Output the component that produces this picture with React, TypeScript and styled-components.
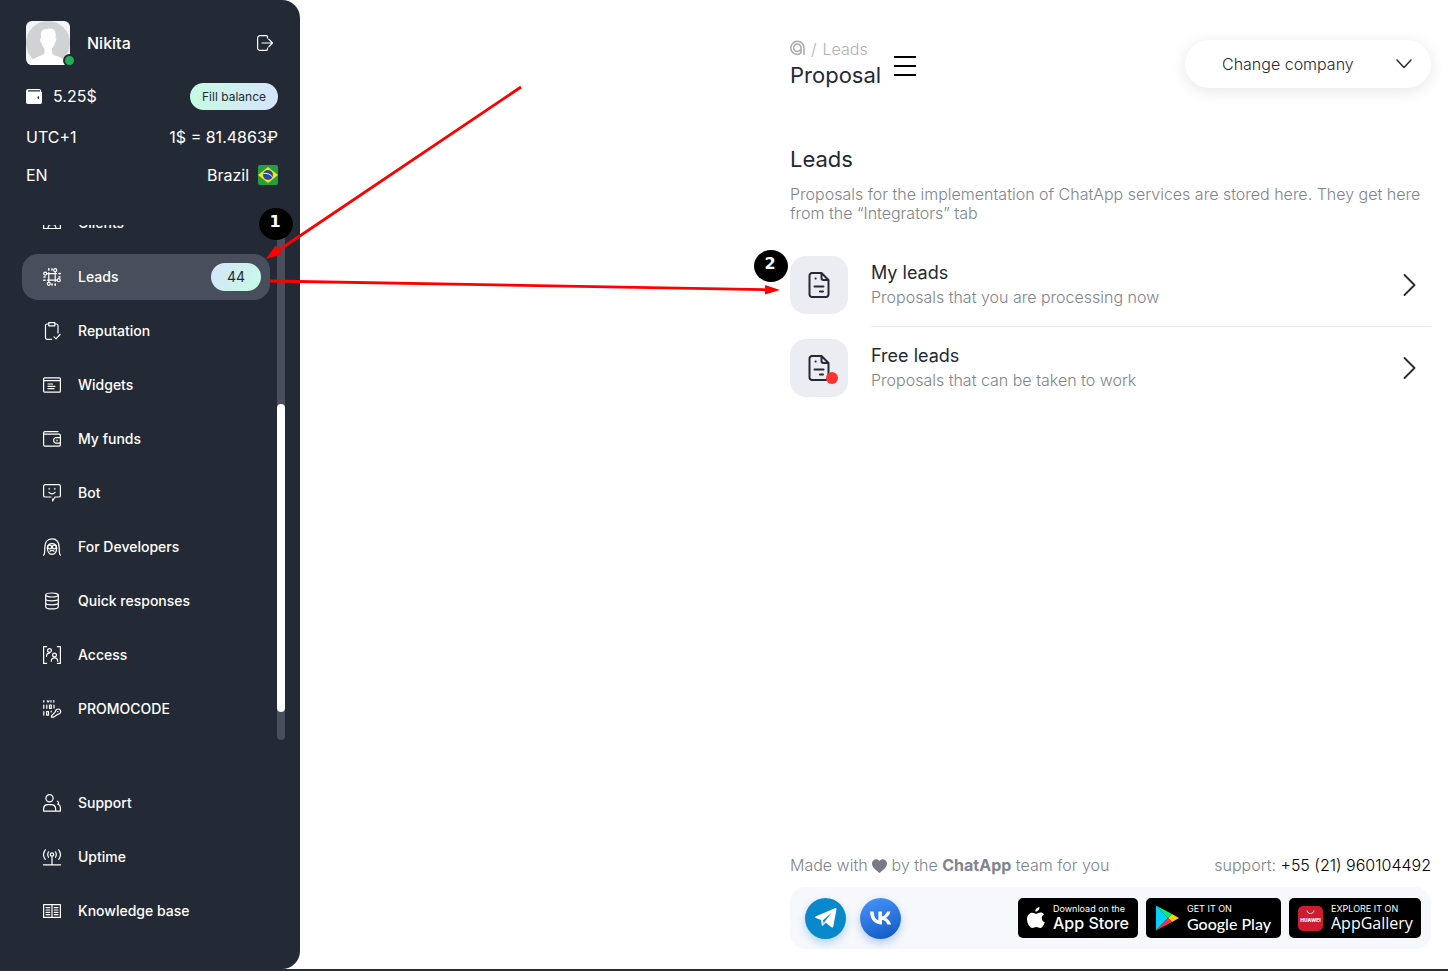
import React from "react";
import styled, { createGlobalStyle } from "styled-components";

const GlobalStyle = createGlobalStyle`
  *, *::before, *::after { box-sizing: border-box; }
  body {
    margin: 0;
    background: #fff;
    color: #242a35;
    font-family: Inter, "Liberation Sans", sans-serif;
    font-size: 16px;
    line-height: 19px;
  }
  h1, h2, h3, p, ul { margin: 0; padding: 0; }
  ul { list-style: none; }
  a { color: inherit; text-decoration: none; }
  button, select { font: inherit; color: inherit; border: 0; background: none; padding: 0; cursor: pointer; }
  svg { display: block; flex: none; }
`;

const Page = styled.div`
  position: relative;
  display: flex;
  min-height: 100vh;
  border-bottom: 2px solid #272e35;
  overflow: hidden;
`;

/* Sidebar */

const Sidebar = styled.aside`
  display: flex;
  flex-direction: column;
  flex: none;
  width: 300px;
  height: calc(100vh - 2px);
  padding: 21px 15px 35px 22px;
  background: #242a35;
  color: #fff;
  border-radius: 0 18px 18px 0;
`;

const Account = styled.div`
  display: flex;
  flex-direction: column;
  padding: 0 7px 0 4px;
`;

const AccountRow = styled.div<{ $height: number }>`
  display: flex;
  align-items: center;
  justify-content: space-between;
  height: ${(p) => p.$height}px;
`;

const Profile = styled.div`
  display: flex;
  align-items: center;
  gap: 17px;
  font-weight: 500;
`;

const Avatar = styled.div`
  position: relative;
  width: 44px;
  height: 44px;

  > svg { border-radius: 6px; }
`;

const OnlineDot = styled.span`
  position: absolute;
  right: -6px;
  bottom: -2px;
  width: 13px;
  height: 13px;
  border: 2px solid #242a35;
  border-radius: 50%;
  background: #1eb053;
`;

const LogoutButton = styled.button`
  margin-right: 4px;
`;

const Inline = styled.span<{ $gap: number }>`
  display: flex;
  align-items: center;
  gap: ${(p) => p.$gap}px;
`;

const FillButton = styled.button`
  height: 27px;
  padding: 0 12px;
  border-radius: 14px;
  background: linear-gradient(100deg, #c6fce2, #d6e4fd);
  color: #242a35;
  font-size: 12px;
`;

const NavArea = styled.div`
  display: flex;
  flex: 1;
  min-height: 0;
  gap: 7px;
  margin: 22px 0 40px;
`;

const NavClip = styled.nav`
  flex: 1;
  overflow: hidden;
`;

const NavList = styled.ul<{ $scrolled?: boolean }>`
  display: flex;
  flex-direction: column;
  gap: 8px;
  margin-top: ${(p) => (p.$scrolled ? "-25px" : "0")};
`;

const NavLink = styled.a<{ $active?: boolean }>`
  display: flex;
  align-items: center;
  gap: 16px;
  height: 46px;
  padding: 0 9px 0 20px;
  border-radius: 16px;
  background: ${(p) => (p.$active ? "#484e5b" : "transparent")};
  font-size: 14px;
  line-height: 18px;
  font-weight: 500;
`;

const Count = styled.span`
  display: flex;
  align-items: center;
  justify-content: center;
  width: 50px;
  height: 28px;
  margin-left: auto;
  border-radius: 14px;
  background: linear-gradient(120deg, #d6e4fd, #c6fce2);
  color: #242a35;
  font-weight: 400;
`;

const Track = styled.div`
  display: grid;
  grid-template-rows: 179fr 308fr 28fr;
  width: 8px;
  border-radius: 4px;
  background: #484e5b;
`;

const Thumb = styled.div`
  grid-row: 2;
  border-radius: 4px;
  background: #fff;
`;

/* Main column */

const Main = styled.main`
  display: flex;
  flex-direction: column;
  flex: 1;
  max-width: 641px;
  margin: 0 17px 0 auto;
  padding: 40px 0 20px;
`;

const Header = styled.header`
  display: flex;
  justify-content: space-between;
  align-items: flex-start;
`;

const TitleBlock = styled.div`
  display: flex;
  align-items: center;
  gap: 13px;
`;

const Crumbs = styled.div`
  display: flex;
  align-items: center;
  gap: 6px;
  color: #b1b2b5;
  font-weight: 300;

  svg { margin-bottom: 3px; }
`;

const Title = styled.h1`
  font-size: 22px;
  line-height: 32px;
  font-weight: 400;
`;

const MenuButton = styled.button`
  display: flex;
  flex-direction: column;
  gap: 7px;
  width: 22px;
`;

const MenuLine = styled.span`
  height: 2px;
  background: #000;
`;

const CompanyPicker = styled.label`
  position: relative;
  width: 246px;
  height: 48px;
  border-radius: 24px;
  background: #fff;
  box-shadow: 0 3px 16px rgba(0, 0, 0, 0.1);

  select {
    width: 100%;
    height: 100%;
    padding-left: 37px;
    border-radius: 24px;
    appearance: none;
    outline: none;
    font-weight: 300;
  }

  svg {
    position: absolute;
    top: 19px;
    right: 19px;
    pointer-events: none;
  }
`;

const SectionTitle = styled.h2`
  margin-top: 52px;
  font-size: 22px;
  line-height: 32px;
  font-weight: 400;
`;

const Description = styled.p`
  margin-top: 10px;
  color: #80848d;
  font-weight: 300;
`;

const LeadList = styled.ul`
  display: flex;
  flex-direction: column;
  margin-top: 21px;
`;

const LeadLink = styled.a`
  display: flex;
  gap: 23px;
  height: 83px;
  padding-top: 12px;
`;

const Tile = styled.span`
  position: relative;
  display: flex;
  align-items: center;
  justify-content: center;
  flex: none;
  width: 58px;
  height: 58px;
  border-radius: 16px;
  background: #ecedf3;
`;

const AlertDot = styled.span`
  position: absolute;
  right: 10px;
  bottom: 13px;
  width: 12px;
  height: 12px;
  border-radius: 50%;
  background: #ff3232;
`;

const LeadBody = styled.span<{ $divided?: boolean }>`
  display: flex;
  align-items: center;
  justify-content: space-between;
  flex: 1;
  padding: 0 15px 12px 0;
  border-bottom: 1px solid ${(p) => (p.$divided ? "#e9eaf1" : "transparent")};
`;

const LeadText = styled.span`
  display: flex;
  flex-direction: column;
  color: #80848d;
  font-weight: 300;
  line-height: 24px;
`;

const LeadName = styled.span`
  color: #242a35;
  font-size: 18px;
  font-weight: 400;
`;

const Footer = styled.footer`
  display: flex;
  flex-direction: column;
  gap: 12px;
  margin-top: auto;
`;

const FooterLine = styled.div`
  display: flex;
  justify-content: space-between;
  color: #80848d;
  font-weight: 300;
  white-space: pre;

  strong { font-weight: 700; }
  a { color: #000; }
  svg { display: inline-block; vertical-align: -2px; }
`;

const LinksBar = styled.div`
  display: flex;
  align-items: center;
  justify-content: space-between;
  height: 62px;
  padding: 0 10px 0 15px;
  border-radius: 16px;
  background: #f7f8fb;
`;

const Social = styled.a<{ $bg: string; $glow: string }>`
  display: flex;
  align-items: center;
  justify-content: center;
  width: 41px;
  height: 41px;
  border-radius: 50%;
  background: ${(p) => p.$bg};
  box-shadow: 0 4px 8px ${(p) => p.$glow};
`;

const StoreBadge = styled.a<{ $width: number }>`
  display: flex;
  align-items: center;
  gap: 8px;
  width: ${(p) => p.$width}px;
  height: 40px;
  padding-left: 9px;
  border-radius: 5px;
  background: #000;
  color: #fff;
  white-space: nowrap;
`;

const StoreText = styled.span`
  display: flex;
  flex-direction: column;
`;

const StoreCaption = styled.small`
  font-size: 9px;
  line-height: 10px;
`;

const StoreName = styled.span<{ $font?: string }>`
  font-family: ${(p) => p.$font || "Inter"}, sans-serif;
  font-size: 16px;
  line-height: 19px;
  font-weight: 500;
`;

/* Walkthrough annotations laid over the page */

const Arrows = styled.svg`
  position: absolute;
  top: 0;
  left: 0;
  pointer-events: none;
`;

const Step = styled.span<{ $x: number; $y: number }>`
  position: absolute;
  left: ${(p) => p.$x}px;
  top: ${(p) => p.$y}px;
  width: 34px;
  height: 32px;
  padding-right: 2px;
  border-radius: 50%;
  background: #000;
  color: #fff;
  font: 700 16px/28px "DejaVu Sans", sans-serif;
  text-align: center;
`;

/* Icons */

const Icon = ({ children }: { children: React.ReactNode }) => (
  <svg width="20" height="20" viewBox="-1 -1 20 20" fill="none" stroke="#fff" strokeWidth="1.2" strokeLinecap="round" strokeLinejoin="round" aria-hidden="true">
    {children}
  </svg>
);

const icons: Record<string, React.ReactNode> = {
  clients: (
    <Icon>
      <path d="M.6 1h16.8v13.500H.6z" />
      <circle cx="9" cy="8" r="2.4" />
      <path d="M5 14.500c0-2.600 1.500-4 4-4s4 1.400 4 4" />
    </Icon>
  ),
  leads: (
    <Icon>
      <circle cx="2.200" cy="5.600" r="1.500" />
      <circle cx="12.200" cy="2.200" r="1.500" />
      <circle cx="15.800" cy="12.200" r="1.500" />
      <circle cx="5.800" cy="15.800" r="1.500" />
      <path d="M3.800 5.600H13.500M12.200 3.800v9.500M14.200 12.200H4.500M5.800 14.200V4.500" />
      <path d="M5.800.8V2M17.200 5.600H16M12.200 17.200V16M.8 12.200H2M1 9h1M16 9h1M9 1v1M9 16v1" strokeWidth="1.600" />
    </Icon>
  ),
  reputation: (
    <Icon>
      <path d="M5.500 2H4a1.500 1.500 0 0 0-1.500 1.500v12.300a1.500 1.500 0 0 0 1.500 1.500h4.500M12 2h1.500A1.500 1.500 0 0 1 15 3.500V11M5.800.6h6v3.200h-6zM11 14.800l2 2 4-4.300" />
    </Icon>
  ),
  widgets: (
    <Icon>
      <rect x=".6" y="1.800" width="16.800" height="14.400" rx="1" />
      <path d="M.6 4.600h16.800M5 8h4.500M5 10.300h7M5 12.700h6" />
    </Icon>
  ),
  funds: (
    <Icon>
      <path d="M15 1.600H2A1.400 1.400 0 0 0 .6 3v11.800a1.400 1.400 0 0 0 1.400 1.400h14a1.400 1.400 0 0 0 1.400-1.400V5.600A1.400 1.400 0 0 0 16 4.200H1M17.400 7.600h-5l-1.600 1.400v2.700l1.600 1.400h5" />
      <path d="M14 10v.8" />
    </Icon>
  ),
  bot: (
    <Icon>
      <path d="M8 13H2.200A1.600 1.600 0 0 1 .6 11.400V2.200A1.600 1.600 0 0 1 2.200.6h13.600a1.600 1.600 0 0 1 1.600 1.600v9.200a1.600 1.600 0 0 1-1.600 1.600H12l-2.400 4V15" />
      <path d="M6.200 4.300v.9M11.800 4.300v.9M6 8.300c1.500 2 4.500 2 6 0" />
    </Icon>
  ),
  developers: (
    <Icon>
      <path d="M.6 17.200c1.300-1.500 1.200-3.700 1.200-7.200C1.800 4.300 4 .8 9 .8S16.200 4.300 16.200 10c0 3.500-.1 5.700 1.200 7.200" />
      <path d="M4.300 9.500C4.300 7 6 5.600 9 5.600s4.700 1.400 4.700 3.900c0 4-1.700 6.800-4.700 6.800s-4.700-2.800-4.700-6.800z" />
      <circle cx="6.700" cy="9" r="1.900" />
      <circle cx="11.300" cy="9" r="1.900" />
      <path d="M7 13.300c.8-1.300 3.200-1.300 4 0" />
    </Icon>
  ),
  responses: (
    <Icon>
      <ellipse cx="9" cy="3" rx="6.300" ry="2" />
      <path d="M2.700 3v12c0 2.600 12.600 2.600 12.600 0V3M2.700 7c0 2.400 12.600 2.400 12.600 0M2.700 11c0 2.400 12.600 2.400 12.600 0" />
    </Icon>
  ),
  access: (
    <Icon>
      <path d="M3.600.6h-3v16.800h3M14.400.6h3v16.800h-3" />
      <circle cx="6.500" cy="4.500" r="1.900" />
      <path d="M3.500 10.500c0-2.500 1.200-3.300 3-3.300" />
      <circle cx="11.500" cy="9" r="1.900" />
      <path d="M8.300 15.200c0-2.300 1-3.300 3.200-3.300s3.200 1 3.200 3.300" />
    </Icon>
  ),
  promo: (
    <Icon>
      <path d="M.8.600v1.500M4.300.8l.8 1.300L6 .8M8 .600v1.500M10.800.600v1.500M.8 5v3.300M3.800 5v3.300M6.500 5h1.800v3.300H6.500zM11 5v3M.8 11.500v3.600M3.600 11.500h1.900v3.600H3.600zM8.200 11v1" />
      <path d="M8.500 15.800l4-4.200a2.600 2.600 0 1 1 2.300 2.600l-4.300 3H8.500zM14.800 11.600h.2" />
    </Icon>
  ),
  support: (
    <Icon>
      <circle cx="6.500" cy="4.300" r="3.600" />
      <path d="M.6 17.200v-2.400c0-2.700 1.900-4.200 4.200-4.200h3.600c2.300 0 4.200 1.500 4.200 4.200v2.400zM12.600 17.200h4.800v-3.800c0-1.500-.7-2.400-2-3.200M14.300 7.200c1.700.6 1.700 2 .4 3" />
    </Icon>
  ),
  uptime: (
    <Icon>
      <circle cx="9" cy="6.500" r="1.700" />
      <path d="M9 8.200V16M.4 16.800h17.200M5.500 3.800c-1 1.800-1 3.800 0 5.500M12.500 3.800c1 1.800 1 3.800 0 5.500M2.300 1.800C0 4.800 0 8.300 2.300 11.300M15.700 1.800c2.300 3 2.300 6.500 0 9.500" />
    </Icon>
  ),
  knowledge: (
    <Icon>
      <path d="M.6 2.600h16.800v12.800H.6zM9 2.600v12.800M3 5.600h3.800M3 8h3.800M3 10.300h3.800M3 12.600h3.800M11.200 5.600H15M11.200 8H15M11.200 10.300H15M11.200 12.600H15" />
    </Icon>
  ),
};

const DocumentIcon = () => (
  <svg width="22" height="28" viewBox="0 0 22 28" fill="none" stroke="#242a35" strokeWidth="2" strokeLinecap="round" strokeLinejoin="round" aria-hidden="true">
    <path d="M13.500 2H4a2.500 2.500 0 0 0-2.500 2.500v19A2.500 2.500 0 0 0 4 26h14a2.500 2.500 0 0 0 2.500-2.500V9zM13.500 2v5a2 2 0 0 0 2 2h5M7.500 7.600h.2M6.500 15.500h9M12 20.500h3" />
  </svg>
);

const Chevron = ({ down }: { down?: boolean }) =>
  down ? (
    <svg width="16" height="10" viewBox="0 0 16 10" fill="none" stroke="#242a35" strokeWidth="1.500" strokeLinecap="round" strokeLinejoin="round" aria-hidden="true">
      <path d="M1 1l7 7.500L15 1" />
    </svg>
  ) : (
    <svg width="13" height="22" viewBox="0 0 13 22" fill="none" stroke="#242a35" strokeWidth="1.800" strokeLinecap="round" strokeLinejoin="round" aria-hidden="true">
      <path d="M1.500 1l10 10-10 10" />
    </svg>
  );

const primaryNav = [
  { icon: "clients", label: "Clients" },
  { icon: "leads", label: "Leads", count: 44 },
  { icon: "reputation", label: "Reputation" },
  { icon: "widgets", label: "Widgets" },
  { icon: "funds", label: "My funds" },
  { icon: "bot", label: "Bot" },
  { icon: "developers", label: "For Developers" },
  { icon: "responses", label: "Quick responses" },
  { icon: "access", label: "Access" },
  { icon: "promo", label: "PROMOCODE" },
];

const secondaryNav = [
  { icon: "support", label: "Support" },
  { icon: "uptime", label: "Uptime" },
  { icon: "knowledge", label: "Knowledge base" },
];

const leadGroups = [
  { name: "My leads", note: "Proposals that you are processing now", alert: false },
  { name: "Free leads", note: "Proposals that can be taken to work", alert: true },
];

const NavItem = ({ icon, label, count }: { icon: string; label: string; count?: number }) => (
  <li>
    <NavLink href="#" $active={count !== undefined}>
      {icons[icon]}
      {label}
      {count !== undefined && <Count>{count}</Count>}
    </NavLink>
  </li>
);

export default function App() {
  return (
    <Page>
      <GlobalStyle />
      <Sidebar>
        <Account>
          <AccountRow $height={44}>
            <Profile>
              <Avatar>
                <svg width="44" height="44" viewBox="0 0 44 44" aria-hidden="true">
                  <path fill="#f4f5f8" d="M0 0h44v44H0z" />
                  <circle cx="22" cy="22" r="22" fill="#d1d2d4" />
                  <path fill="#fff" d="M15 14c-.7-4 2.500-6.500 6.500-6 2.500-1 6.500-.3 7.800 2.800.8 2 .4 4.300.2 6.500 1.300 0 1 3-.6 4.800-.5 2.500-1.600 4.300-3 5.500V32c2 3 8 3.800 12 6.500L41 44H3l3.500-5.500c4-2.700 10-3.500 12-6.500v-4.400c-1.500-1.200-2.500-3-3-5.500-1.600-1.500-1.800-4.800-.5-4.800z" />
                </svg>
                <OnlineDot />
              </Avatar>
              Nikita
            </Profile>
            <LogoutButton aria-label="Log out">
              <svg width="17" height="16" viewBox="0 0 17 16" fill="none" stroke="#fff" strokeWidth="1.200" strokeLinecap="round" strokeLinejoin="round" aria-hidden="true">
                <path d="M10.500 3V2A1.400 1.400 0 0 0 9.100.6H3A2.400 2.400 0 0 0 .6 3v10A2.400 2.400 0 0 0 3 15.400h6.100a1.400 1.400 0 0 0 1.400-1.400v-1M5 8h10.500M11.700 4.200L15.500 8l-3.800 3.800" />
              </svg>
            </LogoutButton>
          </AccountRow>
          <AccountRow $height={63}>
            <Inline $gap={11}>
              <svg width="16" height="15" viewBox="0 0 16 15" aria-hidden="true">
                <path fill="#fff" d="M2.200 0h11A1.800 1.800 0 0 1 15 1.800v.7h-1V1.200H2v1.200h12.500A1.500 1.500 0 0 1 16 4v9.200a1.800 1.800 0 0 1-1.800 1.800H1.800A1.800 1.800 0 0 1 0 13.200v-11A2.200 2.200 0 0 1 2.200 0z" />
                <path fill="#242a35" d="M13 7v3a1.500 1.500 0 0 1 0-3z" />
              </svg>
              5.25$
            </Inline>
            <FillButton>Fill balance</FillButton>
          </AccountRow>
          <AccountRow $height={19}>
            <span>UTC+1</span>
            <span>1$ = 81.4863₽</span>
          </AccountRow>
          <AccountRow $height={56}>
            <span>EN</span>
            <Inline $gap={9}>
              Brazil
              <svg width="20" height="20" viewBox="0 0 20 20" aria-hidden="true">
                <rect width="20" height="20" rx="2" fill="#229e45" />
                <path fill="#f8e509" d="M10 2L20 10l-10 8L0 10z" />
                <circle cx="10" cy="10" r="5" fill="#2b49a3" />
                <path d="M5.500 8.500c3.500-.6 6.500.5 9 3.500" fill="none" stroke="#fff" />
              </svg>
            </Inline>
          </AccountRow>
        </Account>
        <NavArea>
          <NavClip aria-label="Main">
            <NavList $scrolled>
              {primaryNav.map((item) => (
                <NavItem key={item.label} {...item} />
              ))}
            </NavList>
          </NavClip>
          <Track>
            <Thumb />
          </Track>
        </NavArea>
        <NavList>
          {secondaryNav.map((item) => (
            <NavItem key={item.label} {...item} />
          ))}
        </NavList>
      </Sidebar>

      <Main>
        <Header>
          <TitleBlock>
            <div>
              <Crumbs>
                <svg width="15" height="16" viewBox="0 0 15 16" fill="none" stroke="#a7a8ab" strokeWidth="1.500" aria-hidden="true">
                  <path d="M11.200 12.500c-1 1.300-2.200 2-3.800 2A6.600 6.600 0 1 1 14 8v6.800" />
                  <path d="M11 12.800V7.800A3.700 3.700 0 1 0 7.400 11.500c1.500 0 2.500-.7 3.200-1.800" />
                </svg>
                <span>/</span>
                <a href="#">Leads</a>
              </Crumbs>
              <Title>Proposal</Title>
            </div>
            <MenuButton aria-label="Menu">
              <MenuLine />
              <MenuLine />
              <MenuLine />
            </MenuButton>
          </TitleBlock>
          <CompanyPicker>
            <select aria-label="Change company">
              <option>Change company</option>
            </select>
            <Chevron down />
          </CompanyPicker>
        </Header>

        <SectionTitle>Leads</SectionTitle>
        <Description>
          Proposals for the implementation of ChatApp services are stored here. They get here from the “Integrators” tab
        </Description>

        <LeadList>
          {leadGroups.map((group, index) => (
            <li key={group.name}>
              <LeadLink href="#">
                <Tile>
                  <DocumentIcon />
                  {group.alert && <AlertDot />}
                </Tile>
                <LeadBody $divided={index < leadGroups.length - 1}>
                  <LeadText>
                    <LeadName>{group.name}</LeadName>
                    {group.note}
                  </LeadText>
                  <Chevron />
                </LeadBody>
              </LeadLink>
            </li>
          ))}
        </LeadList>

        <Footer>
          <FooterLine>
            <span>
              {"Made with "}
              <svg width="15" height="14" viewBox="0 0 15 14" aria-label="love">
                <path fill="#777b86" d="M7.500 14C4 11 0 8.500 0 4.500 0 .5 5-1.500 7.500 2 10-1.500 15 .5 15 4.500 15 8.500 11 11 7.500 14z" />
              </svg>
              {" by the "}
              <strong>ChatApp</strong>
              {" team for you"}
            </span>
            <span>
              {"support: "}
              <a href="tel:+5521960104492">+55 (21) 960104492</a>
            </span>
          </FooterLine>
          <LinksBar>
            <Inline $gap={14}>
              <Social href="#" aria-label="Telegram" $bg="#0a88cc" $glow="rgba(10, 136, 204, 0.3)">
                <svg width="22" height="20" viewBox="0 0 22 20" aria-hidden="true">
                  <path fill="#fff" d="M21.500 1.200l-3.200 17.300c-.2 1-1 1.200-1.800.7l-5.800-4.400-2.700 2.600c-.6.600-1.200.3-1.300-.5l-.5-5L.9 9.900c-1-.4-1-1.200.2-1.700L20 .2c1-.4 1.700.1 1.500 1z" />
                  <path fill="#0a88cc" d="M8 12.200l9-7.700-7.300 9-.9 2.700z" />
                </svg>
              </Social>
              <Social href="#" aria-label="VK" $bg="linear-gradient(160deg, #4a94ff, #0d58bf)" $glow="rgba(30, 100, 220, 0.3)">
                <svg width="22" height="14" viewBox="0 0 22 14" aria-hidden="true">
                  <path fill="#fff" d="M12 13.500C4.500 13.500.3 8.500 0 .5h3.700c.1 5.800 2.700 8.300 4.700 8.800V.5H12v5c2-.2 4.300-2.600 5-5h3.500c-.6 3.200-3 5.600-4.700 6.500 1.700.8 4.300 2.900 5.400 6.500h-3.900c-.8-2.500-2.800-4.400-5.300-4.700z" />
                </svg>
              </Social>
            </Inline>
            <Inline $gap={8}>
              <StoreBadge href="#" $width={120}>
                <svg width="18" height="22" viewBox="0 0 18 22" aria-hidden="true">
                  <path fill="#fff" d="M12.500 0c.2 2.500-1.900 4.700-4.200 4.600C8 2.200 10.200.2 12.500 0zM16.900 7.400c-3.200 2-2.700 6.400.9 7.800-.9 2.700-2.600 5.800-4.600 5.800-1.500 0-2-.9-3.900-.9s-2.400.9-3.900.9C2.800 21 0 16.500 0 12.300c0-4.100 2.600-6.600 5.300-6.600 1.700 0 2.900 1.100 4.200 1.100 1.200 0 2.300-1.200 4.300-1.200 1.200 0 2.400.6 3.100 1.800z" />
                </svg>
                <StoreText>
                  <StoreCaption>Download on the</StoreCaption>
                  <StoreName>App Store</StoreName>
                </StoreText>
              </StoreBadge>
              <StoreBadge href="#" $width={135}>
                <svg width="24" height="26" viewBox="0 0 24 26" aria-hidden="true">
                  <path fill="#00d2ff" d="M1 .6v24.800L13 13z" />
                  <path fill="#00ef76" d="M1 .5L13 13l4-4z" />
                  <path fill="#ffce00" d="M17 9l-4 4 4 4 7-4z" />
                  <path fill="#fa3146" d="M1 25.500L13 13l4 4z" />
                </svg>
                <StoreText>
                  <StoreCaption>GET IT ON</StoreCaption>
                  <StoreName $font="Lato">Google Play</StoreName>
                </StoreText>
              </StoreBadge>
              <StoreBadge href="#" $width={132}>
                <svg width="25" height="25" viewBox="0 0 25 25" aria-hidden="true">
                  <rect width="25" height="25" rx="5" fill="#ce1b2f" />
                  <path d="M9 4.500c.6 4 6.400 4 7 0" fill="none" stroke="#fff" />
                  <text x="12.500" y="16" fill="#fff" fontFamily="Inter" fontSize="5" fontWeight="800" textAnchor="middle">HUAWEI</text>
                </svg>
                <StoreText>
                  <StoreCaption>EXPLORE IT ON</StoreCaption>
                  <StoreName $font='"Open Sans"'>AppGallery</StoreName>
                </StoreText>
              </StoreBadge>
            </Inline>
          </LinksBar>
        </Footer>
      </Main>

      <Arrows width="800" height="300" viewBox="0 0 800 300" aria-hidden="true">
        <path d="M521 87L276 252M270 281l500 8.800" stroke="#f00" strokeWidth="2.800" fill="none" />
        <path d="M266 259l9.500-13.500 6 9zM780 290l-15 4.500V285z" fill="#f00" />
      </Arrows>
      <Step $x={259} $y={208}>1</Step>
      <Step $x={754} $y={250}>2</Step>
    </Page>
  );
}
